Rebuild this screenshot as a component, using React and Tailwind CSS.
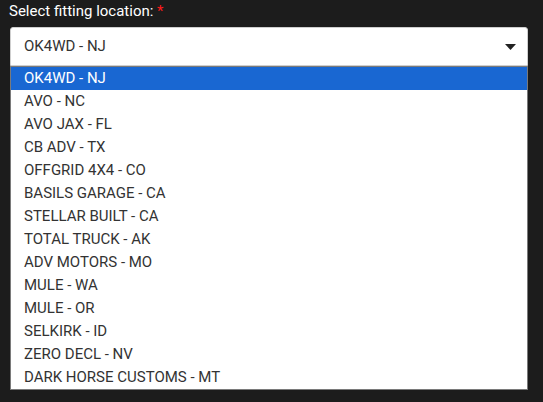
import React from "react";

const items = [
  "OK4WD - NJ",
  "AVO - NC",
  "AVO JAX - FL",
  "CB ADV - TX",
  "OFFGRID 4X4 - CO",
  "BASILS GARAGE - CA",
  "STELLAR BUILT - CA",
  "TOTAL TRUCK - AK",
  "ADV MOTORS - MO",
  "MULE - WA",
  "MULE - OR",
  "SELKIRK - ID",
  "ZERO DECL - NV",
  "DARK HORSE CUSTOMS - MT",
];

export default function App() {
  return (
    <div className="w-[543px] h-[402px] bg-[#1c1c1c] overflow-hidden font-['Roboto',sans-serif]">
      <div className="pl-[9px] pt-[2px] h-[27px] text-[15px] leading-[18px] text-white">
        Select fitting location: <span className="text-[#ff1a1a]">*</span>
      </div>
      <div className="ml-[10px] w-[518px]">
        <div className="h-[39px] bg-white rounded-t-[3px] border border-[#cfcfcf] flex items-center pl-[13px] pr-[11px] text-[15px] text-[#333]">
          <span className="flex-1">OK4WD - NJ</span>
          <svg width="11" height="6" viewBox="0 0 11 6"><path d="M0 0h11L5.5 6z" fill="#222" /></svg>
        </div>
        <div className="border border-[#7a7a7a] bg-white">
          {items.map((it, i) => (
            <div
              key={it}
              className={
                i === 0
                  ? "h-[23px] leading-[23px] pl-[13px] text-[15px] bg-[#1967d2] text-white"
                  : "h-[23px] leading-[23px] pl-[13px] text-[15px] text-[#333]"
              }
            >
              {it}
            </div>
          ))}
        </div>
      </div>
    </div>
  );
}
